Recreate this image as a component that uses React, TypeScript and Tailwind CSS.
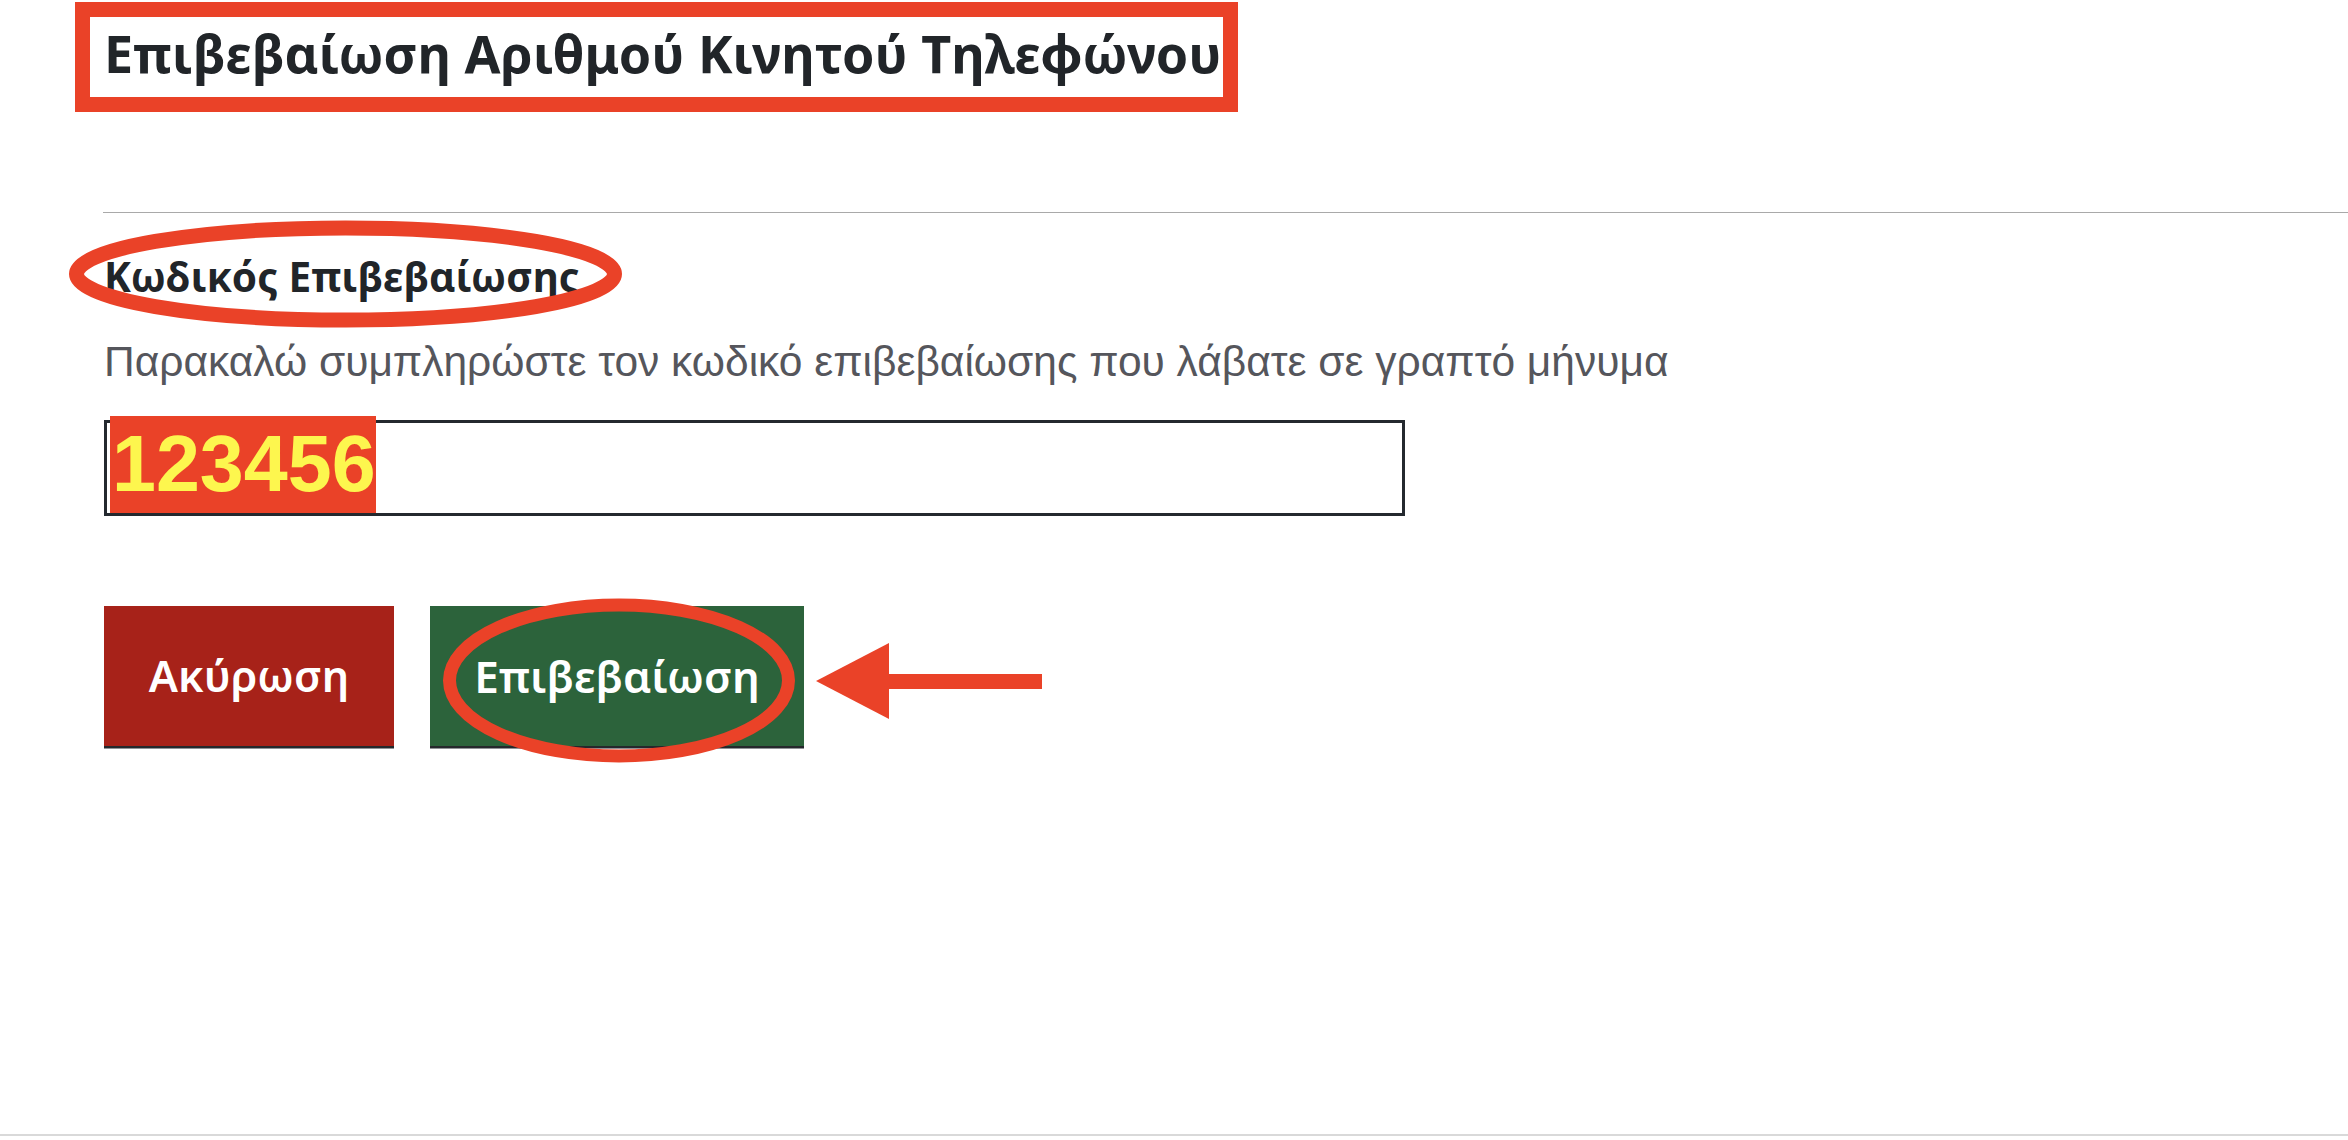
import React from "react";

const noto = { fontFamily: '"Noto Sans", "Open Sans", sans-serif' };
const arial = { fontFamily: '"Liberation Sans", Arial, sans-serif' };

export default function App() {
  return (
    <div className="relative flex h-[1140px] w-full flex-col overflow-hidden bg-white">
      <div className="pl-[104px] pt-[23px]">
        <h1 className="text-[52px] font-bold leading-[60px] text-[#212529]" style={noto}>
          Επιβεβαίωση Αριθμού Κινητού Τηλεφώνου
        </h1>
      </div>

      <div className="ml-[103px] mt-[129px] h-px bg-[#a9a9a9]" />

      <div className="pl-[104px]">
        <h2 className="mt-[40px] text-[40.5px] font-bold leading-[48px] text-[#212529]" style={noto}>
          Κωδικός Επιβεβαίωσης
        </h2>
        <p className="mt-[37px] text-[42.5px] leading-[48px] text-[#55565c]" style={arial}>
          Παρακαλώ συμπληρώστε τον κωδικό επιβεβαίωσης που λάβατε σε γραπτό μήνυμα
        </p>

        <div className="relative mt-[34px] h-[96px] w-[1301px] border-[3px] border-[#24292f] bg-white">
          <div
            className="absolute left-[3px] top-[-7px] flex h-[97px] w-[266px] items-center bg-[#ea4228] pl-[2px] text-[79px] font-bold text-[#fdf64e]"
            style={arial}
          >
            123456
          </div>
        </div>

        <div className="mt-[90px] flex gap-[36px]">
          <button
            className="flex h-[140px] w-[290px] items-center justify-center bg-[#a72219] text-[43.5px] font-semibold text-white shadow-[0_2px_0_#25282c,0_3px_0_#8f9296]"
            style={noto}
          >
            Ακύρωση
          </button>
          <button
            className="flex h-[140px] w-[374px] items-center justify-center bg-[#2c633b] text-[44px] font-semibold text-white shadow-[0_2px_0_#25282c,0_3px_0_#8f9296]"
            style={noto}
          >
            Επιβεβαίωση
          </button>
        </div>
      </div>

      <div className="mb-[4px] mt-auto h-[2px] w-full bg-[#d9d9d9]" />

      {/* annotations */}
      <div className="absolute left-[75px] top-[2px] h-[110px] w-[1163px] border-[15px] border-[#ea4228]" />

      <svg className="absolute left-[68px] top-[220px]" width="555" height="108" viewBox="0 0 555 108">
        <ellipse cx="277.5" cy="54" rx="269" ry="46" fill="none" stroke="#ea4228" strokeWidth="15" />
      </svg>

      <svg className="absolute left-[443px] top-[598px]" width="352" height="165" viewBox="0 0 352 165">
        <ellipse cx="176" cy="82.5" rx="169.5" ry="75.5" fill="none" stroke="#ea4228" strokeWidth="13" />
      </svg>

      <svg className="absolute left-[816px] top-[643px]" width="226" height="76" viewBox="0 0 226 76">
        <polygon points="0,38 73,0 73,76" fill="#ea4228" />
        <rect x="72" y="31" width="154" height="15" fill="#ea4228" />
      </svg>
    </div>
  );
}
